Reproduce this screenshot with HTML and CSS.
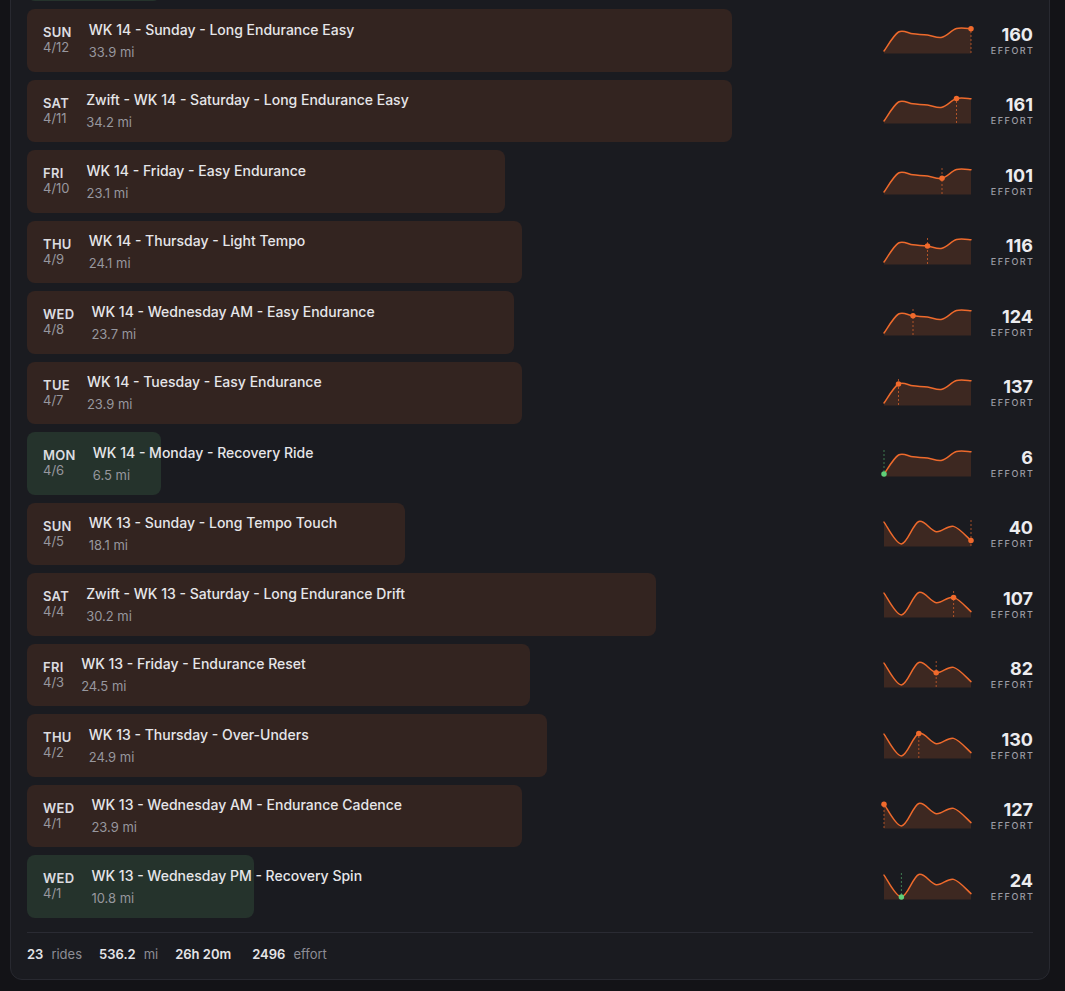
FILE: index.html
```html
<!DOCTYPE html>
<html lang="en">
<head>
<meta charset="utf-8">
<title>Rides</title>
<link rel="stylesheet" href="styles.css">
</head>
<body>
<section class="panel">
  <div class="ride-list">
    <div class="ride ride--easy" style="--w:134px" aria-hidden="true"></div>

    <div class="ride" style="--w:705px">
      <div class="ride-day"><span class="dow">SUN</span><span class="date">4/12</span></div>
      <div class="ride-info"><div class="ride-title">WK 14 - Sunday - Long Endurance Easy</div><div class="ride-dist">33.9 mi</div></div>
      <svg class="spark" viewBox="0 0 87 27">
        <path class="spark-area" d="M0,24C2.42,20.83 9.67,7.84 14.5,4.98C19.33,2.13 24.17,6.36 29,6.87C33.83,7.38 38.67,7.47 43.5,8.03C48.33,8.59 53.17,11.3 58,10.21C62.83,9.12 67.67,2.93 72.5,1.5C77.33,0.07 84.58,1.63 87,1.65L87,26.5L0,26.5Z"/>
        <path class="spark-line" d="M0,24C2.42,20.83 9.67,7.84 14.5,4.98C19.33,2.13 24.17,6.36 29,6.87C33.83,7.38 38.67,7.47 43.5,8.03C48.33,8.59 53.17,11.3 58,10.21C62.83,9.12 67.67,2.93 72.5,1.5C77.33,0.07 84.58,1.63 87,1.65"/>
        <line class="spark-guide" x1="87" y1="0" x2="87" y2="26.5"/>
        <circle class="spark-dot" cx="87" cy="1.65" r="2.75"/>
      </svg>
      <div class="effort"><span class="effort-val">160</span><span class="effort-lbl">EFFORT</span></div>
    </div>

    <div class="ride" style="--w:705px">
      <div class="ride-day"><span class="dow">SAT</span><span class="date">4/11</span></div>
      <div class="ride-info"><div class="ride-title">Zwift - WK 14 - Saturday - Long Endurance Easy</div><div class="ride-dist">34.2 mi</div></div>
      <svg class="spark" viewBox="0 0 87 27">
        <path class="spark-area" d="M0,24C2.42,20.83 9.67,7.84 14.5,4.98C19.33,2.13 24.17,6.36 29,6.87C33.83,7.38 38.67,7.47 43.5,8.03C48.33,8.59 53.17,11.3 58,10.21C62.83,9.12 67.67,2.93 72.5,1.5C77.33,0.07 84.58,1.63 87,1.65L87,26.5L0,26.5Z"/>
        <path class="spark-line" d="M0,24C2.42,20.83 9.67,7.84 14.5,4.98C19.33,2.13 24.17,6.36 29,6.87C33.83,7.38 38.67,7.47 43.5,8.03C48.33,8.59 53.17,11.3 58,10.21C62.83,9.12 67.67,2.93 72.5,1.5C77.33,0.07 84.58,1.63 87,1.65"/>
        <line class="spark-guide" x1="72.5" y1="0" x2="72.5" y2="26.5"/>
        <circle class="spark-dot" cx="72.5" cy="1.5" r="2.75"/>
      </svg>
      <div class="effort"><span class="effort-val">161</span><span class="effort-lbl">EFFORT</span></div>
    </div>

    <div class="ride" style="--w:478px">
      <div class="ride-day"><span class="dow">FRI</span><span class="date">4/10</span></div>
      <div class="ride-info"><div class="ride-title">WK 14 - Friday - Easy Endurance</div><div class="ride-dist">23.1 mi</div></div>
      <svg class="spark" viewBox="0 0 87 27">
        <path class="spark-area" d="M0,24C2.42,20.83 9.67,7.84 14.5,4.98C19.33,2.13 24.17,6.36 29,6.87C33.83,7.38 38.67,7.47 43.5,8.03C48.33,8.59 53.17,11.3 58,10.21C62.83,9.12 67.67,2.93 72.5,1.5C77.33,0.07 84.58,1.63 87,1.65L87,26.5L0,26.5Z"/>
        <path class="spark-line" d="M0,24C2.42,20.83 9.67,7.84 14.5,4.98C19.33,2.13 24.17,6.36 29,6.87C33.83,7.38 38.67,7.47 43.5,8.03C48.33,8.59 53.17,11.3 58,10.21C62.83,9.12 67.67,2.93 72.5,1.5C77.33,0.07 84.58,1.63 87,1.65"/>
        <line class="spark-guide" x1="58" y1="0" x2="58" y2="26.5"/>
        <circle class="spark-dot" cx="58" cy="10.21" r="2.75"/>
      </svg>
      <div class="effort"><span class="effort-val">101</span><span class="effort-lbl">EFFORT</span></div>
    </div>

    <div class="ride" style="--w:495px">
      <div class="ride-day"><span class="dow">THU</span><span class="date">4/9</span></div>
      <div class="ride-info"><div class="ride-title">WK 14 - Thursday - Light Tempo</div><div class="ride-dist">24.1 mi</div></div>
      <svg class="spark" viewBox="0 0 87 27">
        <path class="spark-area" d="M0,24C2.42,20.83 9.67,7.84 14.5,4.98C19.33,2.13 24.17,6.36 29,6.87C33.83,7.38 38.67,7.47 43.5,8.03C48.33,8.59 53.17,11.3 58,10.21C62.83,9.12 67.67,2.93 72.5,1.5C77.33,0.07 84.58,1.63 87,1.65L87,26.5L0,26.5Z"/>
        <path class="spark-line" d="M0,24C2.42,20.83 9.67,7.84 14.5,4.98C19.33,2.13 24.17,6.36 29,6.87C33.83,7.38 38.67,7.47 43.5,8.03C48.33,8.59 53.17,11.3 58,10.21C62.83,9.12 67.67,2.93 72.5,1.5C77.33,0.07 84.58,1.63 87,1.65"/>
        <line class="spark-guide" x1="43.5" y1="0" x2="43.5" y2="26.5"/>
        <circle class="spark-dot" cx="43.5" cy="8.03" r="2.75"/>
      </svg>
      <div class="effort"><span class="effort-val">116</span><span class="effort-lbl">EFFORT</span></div>
    </div>

    <div class="ride" style="--w:487px">
      <div class="ride-day"><span class="dow">WED</span><span class="date">4/8</span></div>
      <div class="ride-info"><div class="ride-title">WK 14 - Wednesday AM - Easy Endurance</div><div class="ride-dist">23.7 mi</div></div>
      <svg class="spark" viewBox="0 0 87 27">
        <path class="spark-area" d="M0,24C2.42,20.83 9.67,7.84 14.5,4.98C19.33,2.13 24.17,6.36 29,6.87C33.83,7.38 38.67,7.47 43.5,8.03C48.33,8.59 53.17,11.3 58,10.21C62.83,9.12 67.67,2.93 72.5,1.5C77.33,0.07 84.58,1.63 87,1.65L87,26.5L0,26.5Z"/>
        <path class="spark-line" d="M0,24C2.42,20.83 9.67,7.84 14.5,4.98C19.33,2.13 24.17,6.36 29,6.87C33.83,7.38 38.67,7.47 43.5,8.03C48.33,8.59 53.17,11.3 58,10.21C62.83,9.12 67.67,2.93 72.5,1.5C77.33,0.07 84.58,1.63 87,1.65"/>
        <line class="spark-guide" x1="29" y1="0" x2="29" y2="26.5"/>
        <circle class="spark-dot" cx="29" cy="6.87" r="2.75"/>
      </svg>
      <div class="effort"><span class="effort-val">124</span><span class="effort-lbl">EFFORT</span></div>
    </div>

    <div class="ride" style="--w:495px">
      <div class="ride-day"><span class="dow">TUE</span><span class="date">4/7</span></div>
      <div class="ride-info"><div class="ride-title">WK 14 - Tuesday - Easy Endurance</div><div class="ride-dist">23.9 mi</div></div>
      <svg class="spark" viewBox="0 0 87 27">
        <path class="spark-area" d="M0,24C2.42,20.83 9.67,7.84 14.5,4.98C19.33,2.13 24.17,6.36 29,6.87C33.83,7.38 38.67,7.47 43.5,8.03C48.33,8.59 53.17,11.3 58,10.21C62.83,9.12 67.67,2.93 72.5,1.5C77.33,0.07 84.58,1.63 87,1.65L87,26.5L0,26.5Z"/>
        <path class="spark-line" d="M0,24C2.42,20.83 9.67,7.84 14.5,4.98C19.33,2.13 24.17,6.36 29,6.87C33.83,7.38 38.67,7.47 43.5,8.03C48.33,8.59 53.17,11.3 58,10.21C62.83,9.12 67.67,2.93 72.5,1.5C77.33,0.07 84.58,1.63 87,1.65"/>
        <line class="spark-guide" x1="14.5" y1="0" x2="14.5" y2="26.5"/>
        <circle class="spark-dot" cx="14.5" cy="4.98" r="2.75"/>
      </svg>
      <div class="effort"><span class="effort-val">137</span><span class="effort-lbl">EFFORT</span></div>
    </div>

    <div class="ride ride--easy" style="--w:134px">
      <div class="ride-day"><span class="dow">MON</span><span class="date">4/6</span></div>
      <div class="ride-info"><div class="ride-title">WK 14 - Monday - Recovery Ride</div><div class="ride-dist">6.5 mi</div></div>
      <svg class="spark" viewBox="0 0 87 27">
        <path class="spark-area" d="M0,24C2.42,20.83 9.67,7.84 14.5,4.98C19.33,2.13 24.17,6.36 29,6.87C33.83,7.38 38.67,7.47 43.5,8.03C48.33,8.59 53.17,11.3 58,10.21C62.83,9.12 67.67,2.93 72.5,1.5C77.33,0.07 84.58,1.63 87,1.65L87,26.5L0,26.5Z"/>
        <path class="spark-line" d="M0,24C2.42,20.83 9.67,7.84 14.5,4.98C19.33,2.13 24.17,6.36 29,6.87C33.83,7.38 38.67,7.47 43.5,8.03C48.33,8.59 53.17,11.3 58,10.21C62.83,9.12 67.67,2.93 72.5,1.5C77.33,0.07 84.58,1.63 87,1.65"/>
        <line class="spark-guide" x1="0" y1="0" x2="0" y2="26.5"/>
        <circle class="spark-dot" cx="0" cy="24" r="2.75"/>
      </svg>
      <div class="effort"><span class="effort-val">6</span><span class="effort-lbl">EFFORT</span></div>
    </div>

    <div class="ride" style="--w:378px">
      <div class="ride-day"><span class="dow">SUN</span><span class="date">4/5</span></div>
      <div class="ride-info"><div class="ride-title">WK 13 - Sunday - Long Tempo Touch</div><div class="ride-dist">18.1 mi</div></div>
      <svg class="spark" viewBox="0 0 87 27">
        <path class="spark-area" d="M0,2.14C2.9,5.78 11.6,24.11 17.4,24C23.2,23.89 29,3.55 34.8,1.5C40.6,-0.55 46.4,10.88 52.2,11.69C58,12.5 63.8,4.9 69.6,6.38C75.4,7.87 84.1,18.23 87,20.6L87,26.5L0,26.5Z"/>
        <path class="spark-line" d="M0,2.14C2.9,5.78 11.6,24.11 17.4,24C23.2,23.89 29,3.55 34.8,1.5C40.6,-0.55 46.4,10.88 52.2,11.69C58,12.5 63.8,4.9 69.6,6.38C75.4,7.87 84.1,18.23 87,20.6"/>
        <line class="spark-guide" x1="87" y1="0" x2="87" y2="26.5"/>
        <circle class="spark-dot" cx="87" cy="20.6" r="2.75"/>
      </svg>
      <div class="effort"><span class="effort-val">40</span><span class="effort-lbl">EFFORT</span></div>
    </div>

    <div class="ride" style="--w:629px">
      <div class="ride-day"><span class="dow">SAT</span><span class="date">4/4</span></div>
      <div class="ride-info"><div class="ride-title">Zwift - WK 13 - Saturday - Long Endurance Drift</div><div class="ride-dist">30.2 mi</div></div>
      <svg class="spark" viewBox="0 0 87 27">
        <path class="spark-area" d="M0,2.14C2.9,5.78 11.6,24.11 17.4,24C23.2,23.89 29,3.55 34.8,1.5C40.6,-0.55 46.4,10.88 52.2,11.69C58,12.5 63.8,4.9 69.6,6.38C75.4,7.87 84.1,18.23 87,20.6L87,26.5L0,26.5Z"/>
        <path class="spark-line" d="M0,2.14C2.9,5.78 11.6,24.11 17.4,24C23.2,23.89 29,3.55 34.8,1.5C40.6,-0.55 46.4,10.88 52.2,11.69C58,12.5 63.8,4.9 69.6,6.38C75.4,7.87 84.1,18.23 87,20.6"/>
        <line class="spark-guide" x1="69.6" y1="0" x2="69.6" y2="26.5"/>
        <circle class="spark-dot" cx="69.6" cy="6.38" r="2.75"/>
      </svg>
      <div class="effort"><span class="effort-val">107</span><span class="effort-lbl">EFFORT</span></div>
    </div>

    <div class="ride" style="--w:503px">
      <div class="ride-day"><span class="dow">FRI</span><span class="date">4/3</span></div>
      <div class="ride-info"><div class="ride-title">WK 13 - Friday - Endurance Reset</div><div class="ride-dist">24.5 mi</div></div>
      <svg class="spark" viewBox="0 0 87 27">
        <path class="spark-area" d="M0,2.14C2.9,5.78 11.6,24.11 17.4,24C23.2,23.89 29,3.55 34.8,1.5C40.6,-0.55 46.4,10.88 52.2,11.69C58,12.5 63.8,4.9 69.6,6.38C75.4,7.87 84.1,18.23 87,20.6L87,26.5L0,26.5Z"/>
        <path class="spark-line" d="M0,2.14C2.9,5.78 11.6,24.11 17.4,24C23.2,23.89 29,3.55 34.8,1.5C40.6,-0.55 46.4,10.88 52.2,11.69C58,12.5 63.8,4.9 69.6,6.38C75.4,7.87 84.1,18.23 87,20.6"/>
        <line class="spark-guide" x1="52.2" y1="0" x2="52.2" y2="26.5"/>
        <circle class="spark-dot" cx="52.2" cy="11.69" r="2.75"/>
      </svg>
      <div class="effort"><span class="effort-val">82</span><span class="effort-lbl">EFFORT</span></div>
    </div>

    <div class="ride" style="--w:520px">
      <div class="ride-day"><span class="dow">THU</span><span class="date">4/2</span></div>
      <div class="ride-info"><div class="ride-title">WK 13 - Thursday - Over-Unders</div><div class="ride-dist">24.9 mi</div></div>
      <svg class="spark" viewBox="0 0 87 27">
        <path class="spark-area" d="M0,2.14C2.9,5.78 11.6,24.11 17.4,24C23.2,23.89 29,3.55 34.8,1.5C40.6,-0.55 46.4,10.88 52.2,11.69C58,12.5 63.8,4.9 69.6,6.38C75.4,7.87 84.1,18.23 87,20.6L87,26.5L0,26.5Z"/>
        <path class="spark-line" d="M0,2.14C2.9,5.78 11.6,24.11 17.4,24C23.2,23.89 29,3.55 34.8,1.5C40.6,-0.55 46.4,10.88 52.2,11.69C58,12.5 63.8,4.9 69.6,6.38C75.4,7.87 84.1,18.23 87,20.6"/>
        <line class="spark-guide" x1="34.8" y1="0" x2="34.8" y2="26.5"/>
        <circle class="spark-dot" cx="34.8" cy="1.5" r="2.75"/>
      </svg>
      <div class="effort"><span class="effort-val">130</span><span class="effort-lbl">EFFORT</span></div>
    </div>

    <div class="ride" style="--w:495px">
      <div class="ride-day"><span class="dow">WED</span><span class="date">4/1</span></div>
      <div class="ride-info"><div class="ride-title">WK 13 - Wednesday AM - Endurance Cadence</div><div class="ride-dist">23.9 mi</div></div>
      <svg class="spark" viewBox="0 0 87 27">
        <path class="spark-area" d="M0,2.14C2.9,5.78 11.6,24.11 17.4,24C23.2,23.89 29,3.55 34.8,1.5C40.6,-0.55 46.4,10.88 52.2,11.69C58,12.5 63.8,4.9 69.6,6.38C75.4,7.87 84.1,18.23 87,20.6L87,26.5L0,26.5Z"/>
        <path class="spark-line" d="M0,2.14C2.9,5.78 11.6,24.11 17.4,24C23.2,23.89 29,3.55 34.8,1.5C40.6,-0.55 46.4,10.88 52.2,11.69C58,12.5 63.8,4.9 69.6,6.38C75.4,7.87 84.1,18.23 87,20.6"/>
        <line class="spark-guide" x1="0" y1="0" x2="0" y2="26.5"/>
        <circle class="spark-dot" cx="0" cy="2.14" r="2.75"/>
      </svg>
      <div class="effort"><span class="effort-val">127</span><span class="effort-lbl">EFFORT</span></div>
    </div>

    <div class="ride ride--easy" style="--w:227px">
      <div class="ride-day"><span class="dow">WED</span><span class="date">4/1</span></div>
      <div class="ride-info"><div class="ride-title">WK 13 - Wednesday PM - Recovery Spin</div><div class="ride-dist">10.8 mi</div></div>
      <svg class="spark" viewBox="0 0 87 27">
        <path class="spark-area" d="M0,2.14C2.9,5.78 11.6,24.11 17.4,24C23.2,23.89 29,3.55 34.8,1.5C40.6,-0.55 46.4,10.88 52.2,11.69C58,12.5 63.8,4.9 69.6,6.38C75.4,7.87 84.1,18.23 87,20.6L87,26.5L0,26.5Z"/>
        <path class="spark-line" d="M0,2.14C2.9,5.78 11.6,24.11 17.4,24C23.2,23.89 29,3.55 34.8,1.5C40.6,-0.55 46.4,10.88 52.2,11.69C58,12.5 63.8,4.9 69.6,6.38C75.4,7.87 84.1,18.23 87,20.6"/>
        <line class="spark-guide" x1="17.4" y1="0" x2="17.4" y2="26.5"/>
        <circle class="spark-dot" cx="17.4" cy="24" r="2.75"/>
      </svg>
      <div class="effort"><span class="effort-val">24</span><span class="effort-lbl">EFFORT</span></div>
    </div>
  </div>

  <footer class="summary">
    <span class="stat"><b>23</b><span>rides</span></span>
    <span class="stat"><b>536.2</b><span>mi</span></span>
    <span class="stat stat--time"><b>26h 20m</b></span>
    <span class="stat"><b>2496</b><span>effort</span></span>
  </footer>
</section>
</body>
</html>
```

FILE: styles.css
```css
* { box-sizing: border-box; }

html, body {
  margin: 0;
  background: #131317;
}

body {
  padding: 0 15px 11px 10px;
  font-family: Inter, "Noto Sans", "Liberation Sans", sans-serif;
  color: #e6e6e9;
  overflow: hidden;
}

.panel {
  margin-top: -78.5px;
  background: #1a1b20;
  border: 1px solid #282930;
  border-radius: 12px;
  padding: 16px 16px 17px;
}

.ride-list {
  display: flex;
  flex-direction: column;
  gap: 8px;
}

.ride {
  position: relative;
  display: flex;
  align-items: center;
  height: 62.5px;
  flex: none;
  padding-left: 16px;
}

.ride::before {
  content: "";
  position: absolute;
  left: 0;
  top: 0;
  bottom: 0;
  width: var(--w);
  background: #332420;
  border-radius: 8px;
}

.ride--easy::before {
  background: #25332c;
}

.ride > * {
  position: relative;
}

.ride-day {
  display: flex;
  flex-direction: column;
  margin-right: 17px;
  flex: none;
}

.dow {
  font-size: 13px;
  line-height: 15px;
  font-weight: 600;
  letter-spacing: 0.3px;
  color: #dcdce0;
}

.date {
  font-size: 13px;
  line-height: 15px;
  color: #97979e;
}

.ride-info {
  flex: 1;
  min-width: 0;
  display: flex;
  flex-direction: column;
  gap: 5px;
}

.ride-title {
  font-size: 14px;
  line-height: 18px;
  font-weight: 500;
  color: #e6e6e9;
  white-space: nowrap;
}

.ride-dist {
  font-size: 13px;
  line-height: 16px;
  color: #97979e;
}

.spark {
  flex: none;
  width: 87px;
  height: 27px;
  overflow: visible;
  margin-right: 16px;
}

.spark-area {
  fill: rgba(240, 106, 42, 0.17);
}

.spark-line {
  fill: none;
  stroke: #ee6a2c;
  stroke-width: 1.5;
  stroke-linecap: round;
}

.spark-guide {
  stroke: #ee6a2c;
  stroke-opacity: 0.65;
  stroke-width: 1;
  stroke-dasharray: 2 2;
}

.spark-dot {
  fill: #f06a2c;
}

.ride--easy .spark-guide {
  stroke: #5cc876;
  stroke-opacity: 0.55;
}

.ride--easy .spark-dot {
  fill: #5fcf78;
}

.effort {
  flex: none;
  width: 46px;
  display: flex;
  flex-direction: column;
  align-items: flex-end;
  padding-top: 1px;
}

.effort-val {
  font-size: 18px;
  line-height: 20px;
  font-weight: 700;
  color: #ececef;
}

.effort-lbl {
  font-size: 9px;
  line-height: 12px;
  font-weight: 500;
  letter-spacing: 1.5px;
  margin-right: -1.5px;
  color: #9d9da5;
}

.summary {
  margin-top: 14.5px;
  border-top: 1px solid #2a2b33;
  padding-top: 13px;
  display: flex;
  gap: 17px;
  font-size: 13px;
  line-height: 16px;
}

.stat {
  display: inline-flex;
  gap: 8px;
}

.stat b {
  font-weight: 600;
  color: #e4e4e7;
}

.stat span {
  color: #8d8d95;
}

.stat--time {
  margin-right: 4px;
}
```
